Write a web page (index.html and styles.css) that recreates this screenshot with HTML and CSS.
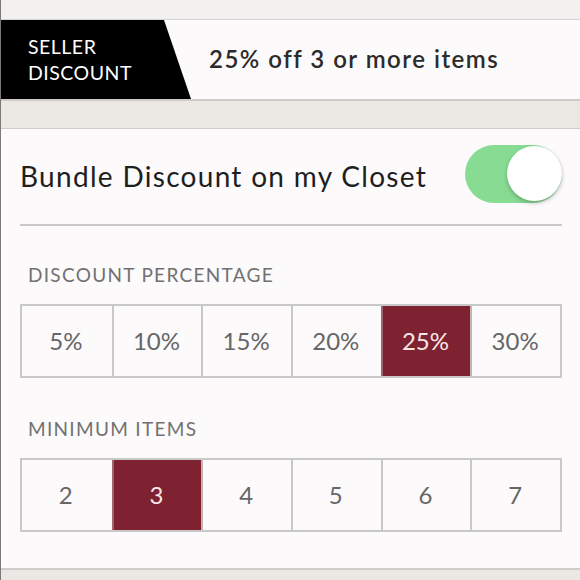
FILE: index.html
```html
<!DOCTYPE html>
<html>
<head>
<meta charset="utf-8">
<link rel="stylesheet" href="styles.css">
</head>
<body>
<div class="page">
  <div class="top"></div>
  <div class="header">
    <div class="badge"><span>SELLER<br>DISCOUNT</span></div>
    <div class="headline">25% off 3 or more items</div>
  </div>
  <div class="band"></div>
  <div class="panel">
    <div class="row">
      <div class="title">Bundle Discount on my Closet</div>
      <div class="toggle"><div class="knob"></div></div>
    </div>
    <div class="label">DISCOUNT PERCENTAGE</div>
    <div class="seg">
      <div class="cell">5%</div>
      <div class="cell">10%</div>
      <div class="cell">15%</div>
      <div class="cell">20%</div>
      <div class="cell on">25%</div>
      <div class="cell">30%</div>
    </div>
    <div class="label label2">MINIMUM ITEMS</div>
    <div class="seg">
      <div class="cell">2</div>
      <div class="cell on">3</div>
      <div class="cell">4</div>
      <div class="cell">5</div>
      <div class="cell">6</div>
      <div class="cell">7</div>
    </div>
  </div>
  <div class="band bottom"></div>
</div>
</body>
</html>
```

FILE: styles.css
```css
html, body {
  margin: 0;
  padding: 0;
  background: #fcfafb;
}
.page {
  width: 580px;
  height: 580px;
  overflow: hidden;
  border-left: 1px solid #7a7a7a;
  box-sizing: border-box;
  font-family: "Lato", "Liberation Sans", sans-serif;
}
.top {
  height: 19px;
  background: #f2f1f0;
  border-bottom: 1px solid #d4d4d4;
}
.header {
  height: 79px;
  display: flex;
  align-items: center;
  background: #fcfafb;
  border-bottom: 2px solid #cfcdcc;
  margin-left: -1px;
}
.badge {
  width: 191px;
  height: 100%;
  background: #000;
  clip-path: polygon(0 0, 164px 0, 191px 100%, 0 100%);
  display: flex;
  align-items: center;
  color: #fff;
  font-size: 19.5px;
  line-height: 26px;
  padding-left: 28px;
  box-sizing: border-box;
  letter-spacing: 0.5px;
}
.headline {
  margin-left: 18px;
  margin-top: -3px;
  font-size: 24px;
  font-weight: 600;
  color: #2b2b2b;
  letter-spacing: 1.5px;
}
.band {
  height: 27px;
  background: #ebe8e4;
  border-bottom: 1px solid #cfcdcb;
}
.panel {
  padding: 0 18px 0 19px;
  height: 441px;
  box-sizing: border-box;
  border-bottom: 2px solid #cfcdcb;
}
.row {
  height: 95px;
  display: flex;
  align-items: center;
  justify-content: space-between;
  border-bottom: 2px solid #c9c7c7;
}
.title {
  font-size: 28px;
  color: #1e1e1e;
  margin-top: -1px;
  letter-spacing: 1.3px;
}
.toggle {
  width: 97px;
  height: 58px;
  border-radius: 29px;
  background: #88db93;
  display: flex;
  justify-content: flex-end;
  align-items: center;
  margin-top: -6px;
}
.knob {
  width: 55px;
  height: 55px;
  border-radius: 50%;
  background: #fff;
  box-shadow: 0 2px 4px rgba(0,0,0,0.25);
}
.label {
  height: 78px;
  box-sizing: border-box;
  line-height: 1;
  padding-top: 39px;
  padding-left: 8px;
  font-size: 19px;
  color: #717171;
  letter-spacing: 1.3px;
}
.label2 {
  height: 80px;
  padding-top: 41px;
}
.seg {
  display: grid;
  grid-template-columns: repeat(6, 1fr);
  border: 2px solid #c8c8c8;
  height: 74px;
  box-sizing: border-box;
  background: #fcfafb;
}
.cell {
  display: flex;
  align-items: center;
  justify-content: center;
  font-size: 24px;
  color: #666;
  border-left: 2px solid #c8c8c8;
  padding-right: 2px;
  padding-bottom: 2px;
}
.cell:first-child {
  border-left: none;
}
.cell.on {
  background: #7e2130;
  color: #f6e6e9;
  border-left-color: #a0646e;
}
.cell.on + .cell {
  border-left-color: #c4b4b6;
}
.bottom {
  height: 20px;
  border: none;
}
```
